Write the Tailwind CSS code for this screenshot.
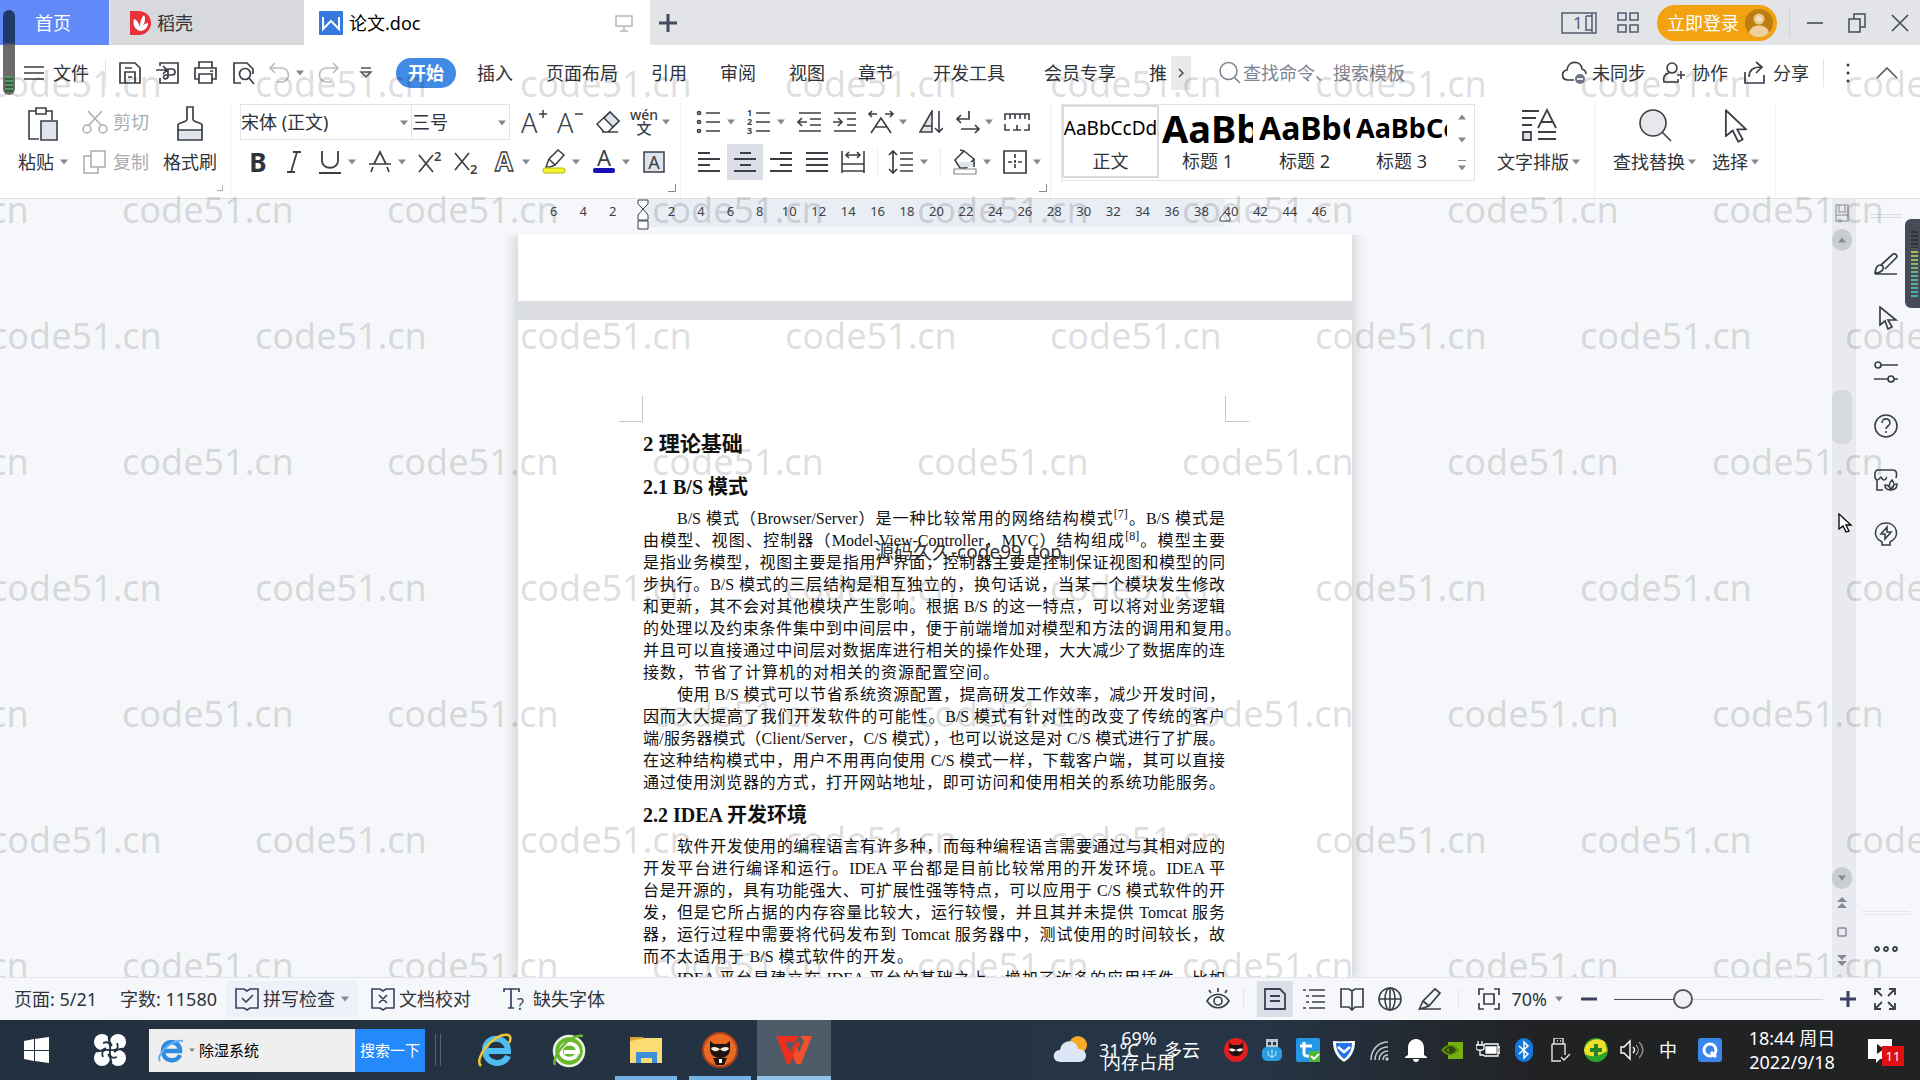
<!DOCTYPE html>
<html lang="zh-CN">
<head>
    <meta charset="UTF-8">
    <meta name="viewport" content="width=device-width, initial-scale=1.0">
    <title>论文.doc</title>
    <script src="https://cdn.jsdelivr.net/npm/@tailwindcss/browser@4"></script>
    <style>
        body { font-family: 'Noto Sans', 'Noto Sans CJK SC', sans-serif; }
        .doc { font-family: 'Liberation Serif', 'Noto Sans CJK SC', serif; }
    </style>
</head>
<body class="relative flex h-screen flex-col overflow-hidden bg-white text-lg leading-6 text-[#2f333a]">

    <!-- shared icon shapes -->
    <svg class="hidden">
        <symbol id="caret" viewBox="0 0 8 5"><path d="M0 0h8L4 5z" fill="#85888e"/></symbol>
        <symbol id="launcher" viewBox="0 0 8 8"><path d="M7.500 0v7.500H0" fill="none" stroke="#85888e"/></symbol>
        <symbol id="pointer" viewBox="0 0 24 32"><path d="M3 2v23l6-5 5 10 4-2-5-9h8z" fill="#fff" stroke="#3b3f46" stroke-width="1.600" stroke-linejoin="round"/></symbol>
    </svg>

    <header class="flex h-[45px] shrink-0 items-center bg-[#e2e4e7]">
        <a href="#" class="flex h-full w-[109px] items-center bg-[#6189f8] pl-[35px] text-white">首页</a>
        <a href="#" class="ml-0.5 flex h-full w-[193px] items-center gap-1 bg-[#d8d9dd] pl-[18px]">
            <svg class="h-6 w-6" viewBox="0 0 24 24"><path d="M1 0h9a12 12 0 0 1 0 24H1z" fill="#e8323c"/><path d="M11 20C4 18 4 11 5 8c3 1 5 4 6 8 0-5 1-9 4-12 2 4 1 8-2 12 2-3 4-4 6-4 0 4-3 8-8 8z" fill="#fff"/></svg>
            <span>稻壳</span>
        </a>
        <a href="#" class="flex h-full w-[346px] items-center gap-1.5 bg-white pl-[15px]">
            <svg class="h-6 w-6" viewBox="0 0 24 24"><rect width="24" height="24" rx="1" fill="#3678dc"/><path d="M4 6v12l8-8 8 8V6" fill="none" stroke="#fff" stroke-width="2"/></svg>
            <span class="text-black">论文.doc</span>
            <svg class="mr-4 ml-auto h-5 w-5" viewBox="0 0 20 20" fill="none" stroke="#b4b7bd" stroke-width="1.500"><path d="M2 3h16v10H2zM10 13v5M6 18h8"/></svg>
        </a>
        <button class="ml-2 flex h-5 w-5 items-center" aria-label="新建标签"><svg class="h-5 w-5" viewBox="0 0 20 20"><path d="M10 1v18M1 10h18" stroke="#454a5e" stroke-width="3"/></svg></button>
        <div class="ml-auto flex h-full items-center pr-[11px]">
            <button aria-label="单页模式"><svg class="h-6 w-9" viewBox="0 0 36 24" fill="none" stroke="#565b70" stroke-width="1.500"><path d="M1 2h34v20H1zM25 5h6M25 5v14h6M31 2v20"/><text x="12" y="18" font-size="17" fill="#565b70" stroke="none">1</text></svg></button>
            <button class="ml-5" aria-label="应用"><svg class="h-[22px] w-[22px]" viewBox="0 0 22 22" fill="none" stroke="#565b70" stroke-width="1.600"><path d="M1 1h8v7H1zM13 1h8v7h-8zM1 13h8v7H1zM13 13h8v7h-8z"/></svg></button>
            <button class="ml-[18px] flex h-9 w-[120px] items-center gap-1.5 rounded-full bg-[#f2a30f] pl-2.5 text-white">立即登录
                <svg class="h-7 w-7" viewBox="0 0 28 28"><circle cx="14" cy="14" r="14" fill="#bd7d11"/><circle cx="14" cy="10" r="5.500" fill="#e8c890"/><circle cx="14" cy="10" r="3" fill="#f3dfba"/><path d="M4 24c1-10 19-10 20 0a14 14 0 0 1-20 0z" fill="#eed09c"/></svg>
            </button>
            <span class="ml-3 h-7 w-px bg-[#d0d2d6]"></span>
            <button class="ml-[17px]" aria-label="最小化"><svg class="h-5 w-4" viewBox="0 0 16 20"><path d="M0 10h16" stroke="#454a55" stroke-width="1.600"/></svg></button>
            <button class="ml-6" aria-label="还原"><svg class="h-5 w-5" viewBox="0 0 20 20" fill="none" stroke="#454a55" stroke-width="1.500"><path d="M2 6h11v13H2zM7 6V1h11v13h-5"/></svg></button>
            <button class="ml-6" aria-label="关闭"><svg class="h-5 w-[18px]" viewBox="0 0 18 20"><path d="M1 2l16 16M17 2L1 18" stroke="#454a55" stroke-width="1.600"/></svg></button>
        </div>
    </header>

    <nav class="flex h-[52px] shrink-0 items-center bg-white pt-1 pr-[22px] pl-6 whitespace-nowrap">
        <button class="flex items-center gap-[9px]">
            <svg class="h-4 w-5" viewBox="0 0 20 16"><path d="M0 2h20M0 8h20M0 14h20" stroke="#3b3f46" stroke-width="1.500"/></svg>文件
        </button>
        <span class="ml-4 h-7 w-px bg-[#e3e5e8]"></span>
        <div class="ml-3 flex items-center gap-3.5">
            <button aria-label="保存"><svg class="h-6 w-6" viewBox="0 0 24 24" fill="none" stroke="#3b3f46" stroke-width="1.700"><path d="M2 2h15l5 5v15H2zM7 22V11h10v11M7 7h7M10 16h4"/></svg></button>
            <button aria-label="输出为PDF"><svg class="h-6 w-6" viewBox="0 0 24 24" fill="none" stroke="#3b3f46" stroke-width="1.700"><path d="M4 5V2h18v20H4v-5M0 9h10M7 5l4 4-4 4M12 17V8h4c4 0 4 6 0 6h-6c-3 0-3 4-1 4s3-1 3-4"/></svg></button>
            <button aria-label="打印"><svg class="h-6 w-6" viewBox="0 0 24 24" fill="none" stroke="#3b3f46" stroke-width="1.700"><path d="M5 7V1h13v6M5 18H1V7h21v11h-4M5 13h13v9H5zM16 10h3"/></svg></button>
            <button aria-label="打印预览"><svg class="h-6 w-6" viewBox="0 0 24 24" fill="none" stroke="#3b3f46" stroke-width="1.700"><path d="M9 22H2V2h13l6 6v5"/><circle cx="13" cy="13" r="5.500"/><path d="M17 17l5 6"/></svg></button>
        </div>
        <button class="ml-3 flex items-center gap-1" aria-label="撤销"><svg class="h-6 w-6" viewBox="0 0 24 24" fill="none" stroke="#b9bcc2" stroke-width="1.700"><path d="M7 2L2 7l5 5M2 7h11c10 0 10 14 0 14H9"/></svg><svg class="h-1.5 w-2"><use href="#caret"/></svg></button>
        <button class="ml-3" aria-label="恢复"><svg class="h-6 w-6" viewBox="0 0 24 24" fill="none" stroke="#b9bcc2" stroke-width="1.700"><path d="M17 2l5 5-5 5M22 7H11C1 7 1 21 11 21h4"/></svg></button>
        <button class="ml-[18px]" aria-label="自定义快速访问"><svg class="h-4 w-4" viewBox="0 0 16 16" fill="none" stroke="#55585f" stroke-width="1.500"><path d="M3 3h10M3 7h10l-5 5z"/></svg></button>

        <button class="ml-[22px] h-[30px] w-[60px] rounded-full bg-[#418ae6] font-bold text-white">开始</button>
        <div class="ml-[21px] flex items-center gap-[33px]">
            <button>插入</button>
            <button>页面布局</button>
            <button>引用</button>
            <button>审阅</button>
            <button>视图</button>
            <button>章节</button>
            <button class="mx-1.5">开发工具</button>
            <button>会员专享</button>
            <button>推</button>
        </div>
        <button class="ml-1 flex h-[34px] w-5 items-center justify-center bg-[#e9eaec]" aria-label="更多选项卡"><svg class="h-2.5 w-1.5" viewBox="0 0 6 10"><path d="M1 1l4 4-4 4" fill="none" stroke="#3b3f46" stroke-width="1.400"/></svg></button>
        <label class="ml-7 flex items-center gap-0.5">
            <svg class="h-6 w-[22px]" viewBox="0 0 22 24" fill="none" stroke="#7b8190" stroke-width="1.500"><circle cx="9.500" cy="10" r="8.500"/><path d="M15.500 16.500L21 22"/></svg>
            <input type="text" class="w-44 bg-transparent outline-none placeholder:text-[#7d8390]" placeholder="查找命令、搜索模板" aria-label="查找命令">
        </label>
        <div class="ml-auto flex items-center">
            <button class="flex items-center gap-[5px]"><svg class="h-6 w-[26px]" viewBox="0 0 26 24" fill="none" stroke="#3b3f46" stroke-width="1.700"><path d="M13 19H7C0 19 0 10 6 9 7-1 20-1 21 8c3 1 4 3 4 5"/><circle cx="19" cy="18" r="5" fill="#6d7485" stroke="none"/><path d="M16 18h6" stroke="#fff"/></svg>未同步</button>
            <button class="ml-4 flex items-center gap-1.5"><svg class="h-6 w-6" viewBox="0 0 24 24" fill="none" stroke="#3b3f46" stroke-width="1.600"><circle cx="10" cy="7" r="5"/><path d="M7 12c-5 1-6 4-5 9h14v-3M15 14h8M19 10v8"/></svg>协作</button>
            <button class="ml-[15px] flex items-center gap-1.5"><svg class="h-6 w-6" viewBox="0 0 24 24" fill="none" stroke="#3b3f46" stroke-width="1.700"><path d="M2 11v11h19v-8M6 16c0-7 4-10 12-10M13 1l6 5-6 6"/></svg>分享</button>
            <span class="ml-3.5 h-7 w-px bg-[#e3e5e8]"></span>
            <button class="ml-[22px]" aria-label="更多"><svg class="h-5 w-1" viewBox="0 0 4 20" fill="#3b3f46"><circle cx="2" cy="2" r="1.500"/><circle cx="2" cy="10" r="1.500"/><circle cx="2" cy="18" r="1.500"/></svg></button>
            <button class="ml-[26px]" aria-label="收起功能区"><svg class="h-3 w-[22px]" viewBox="0 0 22 12"><path d="M1 11L11 1l10 10" fill="none" stroke="#55585f" stroke-width="1.600"/></svg></button>
        </div>
    </nav>

    <section class="flex h-[102px] shrink-0 border-b border-[#dddfe3] bg-white pt-[5px] whitespace-nowrap">
        <!-- clipboard -->
        <div class="flex w-[231px] border-r border-[#f0f1f3] pl-[18px]">
            <button class="flex w-[50px] flex-col">
                <span class="flex h-10 w-full items-center justify-center pt-1"><svg class="h-9 w-8" viewBox="0 0 32 36" fill="none" stroke="#3b3f46" stroke-width="1.600"><path d="M12 33H2V5h7M19 5h6v9M9 2h10v6H9z"/><path d="M14 15h16v19H14z" fill="#dfe3ea"/></svg></span>
                <span class="flex h-10 items-center gap-1.5">粘贴<svg class="h-1.5 w-2"><use href="#caret"/></svg></span>
            </button>
            <div class="ml-3.5 flex flex-col text-[#a9acb2]">
                <button class="flex h-10 items-center gap-[5px]"><svg class="h-6 w-[26px]" viewBox="0 0 26 24" fill="none" stroke="#a9acb2" stroke-width="1.500"><circle cx="5" cy="19" r="4"/><circle cx="21" cy="19" r="4"/><path d="M7 15L20 1M19 15L6 1"/></svg>剪切</button>
                <button class="flex h-10 items-center gap-[5px]"><svg class="h-6 w-[26px]" viewBox="0 0 26 24" fill="none" stroke="#a9acb2" stroke-width="1.500"><path d="M9 1h14v16H9zM9 6H2v17h14v-6"/></svg>复制</button>
            </div>
            <button class="ml-3.5 flex flex-col">
                <span class="flex h-10 w-full items-center justify-center pt-1"><svg class="h-9 w-7" viewBox="0 0 28 36" fill="none" stroke="#3b3f46" stroke-width="1.700"><path d="M2 24h24v10H2z" fill="#dfe3ea"/><path d="M2 24v-5c0-3 9-2 9-6V1h6v12c0 4 9 3 9 6v5"/></svg></span>
                <span class="flex h-10 items-center">格式刷</span>
            </button>
            <svg class="mr-[7px] mb-1.5 ml-auto h-2 w-2 self-end"><use href="#launcher"/></svg>
        </div>

        <!-- font -->
        <div class="flex w-[450px] border-r border-[#f0f1f3] pl-[9px]">
            <div>
                <div class="flex h-10 items-center">
                    <div class="relative">
                        <select class="h-9 w-[172px] appearance-none border border-[#e1e3e7]" aria-label="字体"><option>宋体 (正文)</option></select>
                        <svg class="absolute top-4 right-1 h-1.5 w-2"><use href="#caret"/></svg>
                    </div>
                    <div class="relative">
                        <select class="h-9 w-[98px] appearance-none border border-l-0 border-[#e1e3e7]" aria-label="字号"><option>三号</option></select>
                        <svg class="absolute top-4 right-1 h-1.5 w-2"><use href="#caret"/></svg>
                    </div>
                    <button class="ml-1.5 flex w-9 justify-center" aria-label="增大字号"><svg class="h-7 w-7" viewBox="0 0 28 28"><text x="1" y="25" font-size="27" font-weight="300" fill="#3b3f46">A</text><path d="M19 6h8M23 2v8" stroke="#3b3f46" stroke-width="1.500"/></svg></button>
                    <button class="flex w-9 justify-center" aria-label="减小字号"><svg class="h-7 w-7" viewBox="0 0 28 28"><text x="1" y="25" font-size="27" font-weight="300" fill="#3b3f46">A</text><path d="M19 6h8" stroke="#3b3f46" stroke-width="1.500"/></svg></button>
                    <button class="ml-0.5 flex w-9 justify-center" aria-label="清除格式"><svg class="h-6 w-6" viewBox="0 0 24 24" fill="none" stroke="#3b3f46" stroke-width="1.500"><path d="M1 14L14 2l9 9-11 11H8zM6 22h16"/><path d="M8 8l9 9 6-6-9-9z" fill="#dfe3ea"/></svg></button>
                    <button class="flex w-[50px] items-center" aria-label="拼音指南"><svg class="h-7 w-9" viewBox="0 0 36 28" fill="#3b3f46"><text x="18" y="12" font-size="14" font-weight="500" text-anchor="middle">wén</text><text x="18" y="26" font-size="15" font-weight="500" text-anchor="middle">文</text></svg><svg class="h-1.5 w-2"><use href="#caret"/></svg></button>
                </div>
                <div class="flex h-10 items-center">
                    <button class="w-9 text-center text-[26px] font-bold" aria-label="加粗">B</button>
                    <button class="flex w-9 justify-center" aria-label="倾斜"><svg class="h-6 w-4" viewBox="0 0 16 24"><path d="M7 2h8M1 22h8M11 2L5 22" fill="none" stroke="#3b3f46" stroke-width="1.800"/></svg></button>
                    <button class="flex w-[50px] items-center" aria-label="下划线"><svg class="h-6 w-9" viewBox="0 0 36 24"><path d="M10 1v10c0 9 16 9 16 0V1M7 23h22" fill="none" stroke="#3b3f46" stroke-width="1.800"/></svg><svg class="h-1.5 w-2"><use href="#caret"/></svg></button>
                    <button class="flex w-[50px] items-center" aria-label="删除线"><svg class="h-6 w-9" viewBox="0 0 36 24"><path d="M7 14h22M12 14l6-12 6 12M11 17l-2 5M25 17l2 5" fill="none" stroke="#3b3f46" stroke-width="1.700"/></svg><svg class="h-1.5 w-2"><use href="#caret"/></svg></button>
                    <button class="flex w-9 justify-center" aria-label="上标"><svg class="h-6 w-6" viewBox="0 0 24 24"><path d="M1 5l14 17M15 5L1 22" stroke="#3b3f46" stroke-width="1.700"/><text x="16" y="11" font-size="13" font-weight="600" fill="#3b3f46">2</text></svg></button>
                    <button class="flex w-9 justify-center" aria-label="下标"><svg class="h-6 w-6" viewBox="0 0 24 24"><path d="M1 3l14 17M15 3L1 20" stroke="#3b3f46" stroke-width="1.700"/><text x="16" y="24" font-size="13" font-weight="600" fill="#3b3f46">2</text></svg></button>
                    <button class="ml-0.5 flex w-[50px] items-center" aria-label="文字效果"><svg class="h-7 w-9" viewBox="0 0 36 28"><text x="18" y="23" font-size="26" font-weight="700" text-anchor="middle" fill="#fff" stroke="#3b3f46" stroke-width="1.300">A</text></svg><svg class="h-1.5 w-2"><use href="#caret"/></svg></button>
                    <button class="flex w-[50px] items-center" aria-label="突出显示"><svg class="h-7 w-9" viewBox="0 0 36 28" fill="none" stroke="#3b3f46" stroke-width="1.500"><path d="M10 19l3-8 9-9 6 5-9 10-5 2zM13 11l6 6"/><rect x="7" y="20" width="22" height="5" rx="2" fill="#f1f52a" stroke="#b5b81e" stroke-width="1"/></svg><svg class="h-1.5 w-2"><use href="#caret"/></svg></button>
                    <button class="flex w-[50px] items-center" aria-label="字体颜色"><svg class="h-7 w-9" viewBox="0 0 36 28"><text x="18" y="18" font-size="22" text-anchor="middle" fill="#3b3f46">A</text><rect x="7" y="20" width="22" height="5" rx="2" fill="#1410b4"/></svg><svg class="h-1.5 w-2"><use href="#caret"/></svg></button>
                    <button class="flex w-9 justify-center" aria-label="字符底纹"><svg class="h-6 w-6" viewBox="0 0 24 24"><rect x="2" y="2" width="20" height="20" fill="#dfe3ea" stroke="#3b3f46" stroke-width="1.500"/><text x="12" y="19" font-size="18" text-anchor="middle" fill="#3b3f46">A</text></svg></button>
                </div>
            </div>
            <svg class="mr-4 mb-1.5 -ml-2 h-2 w-2 shrink-0 self-end"><use href="#launcher"/></svg>
        </div>

        <!-- paragraph -->
        <div class="flex w-[370px] border-r border-[#f0f1f3] pl-2.5">
            <div>
                <div class="flex h-10 items-center">
                    <button class="flex w-[50px] items-center" aria-label="项目符号"><svg class="h-6 w-9" viewBox="0 0 36 24" fill="none" stroke="#3b3f46" stroke-width="1.700"><circle cx="8" cy="3" r="1.500"/><circle cx="8" cy="12" r="1.500"/><circle cx="8" cy="21" r="1.500"/><path d="M15 3h14M15 12h14M15 21h14"/></svg><svg class="h-1.5 w-2"><use href="#caret"/></svg></button>
                    <button class="flex w-[50px] items-center" aria-label="编号"><svg class="h-7 w-9" viewBox="0 0 36 28" fill="#3b3f46"><g font-size="9" font-weight="700"><text x="6" y="8">1</text><text x="6" y="17">2</text><text x="6" y="26">3</text></g><path d="M15 5h14M15 14h14M15 23h14" stroke="#3b3f46" stroke-width="1.700"/></svg><svg class="h-1.5 w-2"><use href="#caret"/></svg></button>
                    <button class="flex w-9 justify-center" aria-label="减少缩进"><svg class="h-6 w-6" viewBox="0 0 24 24" fill="none" stroke="#3b3f46" stroke-width="1.700"><path d="M2 3h22M13 9h11M13 15h11M2 21h22M10 12H1M5 8l-4 4 4 4"/></svg></button>
                    <button class="flex w-9 justify-center" aria-label="增加缩进"><svg class="h-6 w-6" viewBox="0 0 24 24" fill="none" stroke="#3b3f46" stroke-width="1.700"><path d="M1 3h22M14 9h9M14 15h9M1 21h22M0 12h9M5 8l4 4-4 4"/></svg></button>
                    <button class="flex w-[50px] items-center" aria-label="中文版式"><svg class="h-6 w-9" viewBox="0 0 36 24" fill="none" stroke="#3b3f46" stroke-width="1.600"><path d="M6 4h8M9 1L6 4l3 3M22 4h8M27 1l3 3-3 3M8 23L18 8l10 15M12 17h12"/></svg><svg class="h-1.5 w-2"><use href="#caret"/></svg></button>
                    <button class="flex w-9 justify-center" aria-label="排序"><svg class="h-6 w-6" viewBox="0 0 24 24" fill="none" stroke="#3b3f46" stroke-width="1.600"><path d="M1 22L13 1v21z" fill="#dfe3ea"/><path d="M5 16h8M20 1v21M16 18l4 4 4-4"/></svg></button>
                    <button class="flex w-[50px] items-center" aria-label="换行符"><svg class="h-6 w-9" viewBox="0 0 36 24" fill="none" stroke="#3b3f46" stroke-width="1.700"><path d="M20 1v8H8M12 5L8 9l4 4M12 19h18M26 15l4 4-4 4"/></svg><svg class="h-1.5 w-2"><use href="#caret"/></svg></button>
                    <button class="flex w-9 justify-center" aria-label="标尺"><svg class="h-[18px] w-[26px]" viewBox="0 0 26 18" fill="none" stroke="#3b3f46" stroke-width="1.600"><path d="M1 7V1h24v6M6 1v5M11 1v5M16 1v5M21 1v5M1 11v6h5M25 11v6h-5M9 17h8M13 12v5"/></svg></button>
                </div>
                <div class="flex h-10 items-center">
                    <button class="flex w-9 justify-center" aria-label="左对齐"><svg class="h-6 w-6" viewBox="0 0 24 24" stroke="#3b3f46" stroke-width="1.800"><path d="M1 3h12M1 9h22M1 15h12M1 21h22"/></svg></button>
                    <button class="flex h-9 w-9 items-center justify-center bg-[#dcdfe7]" aria-label="居中"><svg class="h-6 w-6" viewBox="0 0 24 24" stroke="#3b3f46" stroke-width="1.800"><path d="M7 3h11M1 9h22M7 15h11M1 21h22"/></svg></button>
                    <button class="flex w-9 justify-center" aria-label="右对齐"><svg class="h-6 w-6" viewBox="0 0 24 24" stroke="#3b3f46" stroke-width="1.800"><path d="M11 3h12M1 9h22M11 15h12M1 21h22"/></svg></button>
                    <button class="flex w-9 justify-center" aria-label="两端对齐"><svg class="h-6 w-6" viewBox="0 0 24 24" stroke="#3b3f46" stroke-width="1.800"><path d="M1 3h22M1 9h22M1 15h22M1 21h22"/></svg></button>
                    <button class="flex w-9 justify-center" aria-label="分散对齐"><svg class="h-6 w-6" viewBox="0 0 24 24" fill="none" stroke="#3b3f46" stroke-width="1.600"><path d="M1 1v22M23 1v22M5 5h14M8 2L5 5l3 3M16 2l3 3-3 3M1 14h22M1 21h22"/></svg></button>
                    <span class="mx-1.5 h-7 w-px bg-[#eceef0]"></span>
                    <button class="flex w-[50px] items-center" aria-label="行距"><svg class="h-6 w-9" viewBox="0 0 36 24" fill="none" stroke="#3b3f46" stroke-width="1.700"><path d="M9 1v22M5 5l4-4 4 4M5 19l4 4 4-4M16 3h13M16 9h13M16 15h13M16 21h13"/></svg><svg class="h-1.5 w-2"><use href="#caret"/></svg></button>
                    <span class="mx-1.5 h-7 w-px bg-[#eceef0]"></span>
                    <button class="flex w-[50px] items-center" aria-label="底纹颜色"><svg class="h-7 w-9" viewBox="0 0 36 28" fill="none" stroke="#3b3f46" stroke-width="1.600"><path d="M8 12l9-9 10 8-8 9h-6z"/><path d="M12 14h14v5h-13z" fill="#dfe3ea" stroke="none"/><path d="M17 3l-4-1M27 11v8"/><path d="M7 21h22v5H7z" fill="#fff" stroke="#85888e" stroke-width="1.200"/></svg><svg class="h-1.5 w-2"><use href="#caret"/></svg></button>
                    <button class="flex w-[50px] items-center" aria-label="边框"><svg class="h-6 w-9" viewBox="0 0 36 24" fill="none" stroke="#3b3f46" stroke-width="1.700"><path d="M7 1h22v22H7z"/><path d="M11 12h14M18 4v16" stroke-dasharray="4 2 2 2"/></svg><svg class="h-1.5 w-2"><use href="#caret"/></svg></button>
                </div>
            </div>
            <svg class="mb-1.5 -ml-2 h-2 w-2 shrink-0 self-end"><use href="#launcher"/></svg>
        </div>

        <!-- style gallery -->
        <div class="mt-0.5 ml-2.5 flex h-[77px] w-[414px] border border-[#e1e3e7]">
            <button class="flex h-[73px] w-[97px] flex-col items-center overflow-hidden border-2 border-[#d9dbe0] text-black"><span class="flex h-[42px] items-center text-[19px]">AaBbCcDd</span><span class="text-[#2f333a]">正文</span></button>
            <button class="flex h-[73px] w-[97px] flex-col items-center overflow-hidden px-[3px] pt-0.5 text-black"><span class="flex h-[42px] w-full items-center overflow-hidden text-[38px] font-bold">AaBb</span><span class="text-[#2f333a]">标题 1</span></button>
            <button class="flex h-[73px] w-[97px] flex-col items-center overflow-hidden px-[3px] pt-0.5 text-black"><span class="flex h-[42px] w-full items-center overflow-hidden text-[32px] font-bold">AaBbC</span><span class="text-[#2f333a]">标题 2</span></button>
            <button class="flex h-[73px] w-[97px] flex-col items-center overflow-hidden px-[3px] pt-0.5 text-black"><span class="flex h-[42px] w-full items-center overflow-hidden text-[27px] font-bold">AaBbCc</span><span class="text-[#2f333a]">标题 3</span></button>
            <div class="flex flex-1 flex-col items-center justify-around">
                <button class="rotate-180" aria-label="上一行"><svg class="h-1.5 w-2"><use href="#caret"/></svg></button>
                <button aria-label="下一行"><svg class="h-1.5 w-2"><use href="#caret"/></svg></button>
                <button class="border-t border-[#85888e] pt-1" aria-label="展开样式"><svg class="h-1.5 w-2"><use href="#caret"/></svg></button>
            </div>
        </div>

        <div class="ml-2.5 flex w-[110px] border-r border-[#f0f1f3] pl-3">
            <button class="flex flex-col">
                <span class="flex h-12 w-full items-center justify-center"><svg class="h-9 w-9" viewBox="0 0 36 36" fill="none" stroke="#3b3f46" stroke-width="1.800"><path d="M1 3h17M1 10h14M1 17h10M17 31h18M17 24h18"/><path d="M2 24h8v8H2z" fill="#dfe3ea"/><path d="M17 20L26 2l9 18M20 14h12"/></svg></span>
                <span class="flex h-6 items-center gap-[3px]">文字排版<svg class="h-1.5 w-2"><use href="#caret"/></svg></span>
            </button>
        </div>
        <div class="flex w-[181px] gap-4 border-r border-[#f0f1f3] pl-[18px]">
            <button class="flex flex-col">
                <span class="flex h-12 w-full items-center justify-center"><svg class="h-9 w-9" viewBox="0 0 36 36" fill="none" stroke="#3b3f46" stroke-width="1.600"><circle cx="16" cy="15" r="13" fill="#e6e8ec"/><path d="M25 24l9 9"/></svg></span>
                <span class="flex h-6 items-center gap-[3px]">查找替换<svg class="h-1.5 w-2"><use href="#caret"/></svg></span>
            </button>
            <button class="flex flex-col">
                <span class="flex h-12 w-full items-center justify-center"><svg class="h-9 w-7"><use href="#pointer"/></svg></span>
                <span class="flex h-6 items-center gap-[3px]">选择<svg class="h-1.5 w-2"><use href="#caret"/></svg></span>
            </button>
        </div>
    </section>

    <main class="flex min-h-0 flex-1 bg-[#f5f7fa]">
        <div class="flex min-w-0 flex-1 flex-col items-center">
            <!-- ruler -->
            <div class="flex h-9 w-full shrink-0 justify-center pl-[38px]">
                <div class="relative flex w-[834px] justify-center">
                    <div class="absolute top-0 left-[125px] h-7 w-[582px] bg-[#e9edf4]"></div>
                    <div id="ruler" class="absolute top-[3px] left-[21px] grid w-[795px] grid-cols-27 text-center text-[13px] leading-[18px] text-[#3d4148]"></div>
                    <svg class="absolute top-0 left-[119px] h-8 w-3" viewBox="0 0 12 32" fill="#fff" stroke="#3b3f46"><path d="M1 1h10v4L6 10 1 5zM6 10l5 6v5H1v-5zM1 22h10v8H1z"/></svg>
                    <svg class="absolute top-1 left-[701px] h-5 w-3" viewBox="0 0 12 20" fill="#fff" stroke="#3b3f46"><path d="M6 9l5 6v3H1v-3z"/></svg>
                </div>
            </div>
            <!-- pages -->
            <div class="flex min-h-0 w-full flex-1 justify-center overflow-hidden pl-[38px]">
                <div class="doc flex w-[834px] flex-col bg-[#dcdde0] shadow-[0_0_12px_3px_#cdd0d5]">
                    <div class="mb-[19px] h-[66px] shrink-0 bg-white"></div>
                    <article class="flex-1 bg-white pt-[76px] pr-[127px] pl-[125px] text-base leading-[22px] whitespace-nowrap text-[#111]">
                        <div class="-mx-6 flex h-[26px] justify-between">
                            <span class="w-6 border-r border-b border-[#c4c6ca]"></span>
                            <span class="w-6 border-b border-l border-[#c4c6ca]"></span>
                        </div>
                        <h1 class="text-[21px] leading-[44px] font-bold">2 理论基础</h1>
                        <h2 class="text-xl leading-[42px] font-bold">2.1 B/S 模式</h2>
                        <div class="[&>p]:h-[22px] [&>p]:[text-align-last:justify]">
                            <p class="pl-[34px]">B/S 模式（Browser/Server）是一种比较常用的网络结构模式<sup class="text-xs leading-none">[7]</sup>。B/S 模式是</p>
                            <p>由模型、视图、控制器（Model-View-Controller，MVC）结构组成<sup class="text-xs leading-none">[8]</sup>。模型主要</p>
                            <p>是指业务模型，视图主要是指用户界面，控制器主要是控制保证视图和模型的同</p>
                            <p>步执行。B/S 模式的三层结构是相互独立的，换句话说，当某一个模块发生修改</p>
                            <p>和更新，其不会对其他模块产生影响。根据 B/S 的这一特点，可以将对业务逻辑</p>
                            <p class="-mr-4">的处理以及约束条件集中到中间层中，便于前端增加对模型和方法的调用和复用。</p>
                            <p>并且可以直接通过中间层对数据库进行相关的操作处理，大大减少了数据库的连</p>
                            <p class="w-[356px]">接数，节省了计算机的对相关的资源配置空间。</p>
                            <p class="pl-[34px]">使用 B/S 模式可以节省系统资源配置，提高研发工作效率，减少开发时间，</p>
                            <p>因而大大提高了我们开发软件的可能性。B/S 模式有针对性的改变了传统的客户</p>
                            <p>端/服务器模式（Client/Server，C/S 模式），也可以说这是对 C/S 模式进行了扩展。</p>
                            <p>在这种结构模式中，用户不用再向使用 C/S 模式一样，下载客户端，其可以直接</p>
                            <p>通过使用浏览器的方式，打开网站地址，即可访问和使用相关的系统功能服务。</p>
                        </div>
                        <h2 class="text-xl leading-[42px] font-bold">2.2 IDEA 开发环境</h2>
                        <div class="[&>p]:h-[22px] [&>p]:[text-align-last:justify]">
                            <p class="pl-[34px]">软件开发使用的编程语言有许多种，而每种编程语言需要通过与其相对应的</p>
                            <p>开发平台进行编译和运行。IDEA 平台都是目前比较常用的开发环境。IDEA 平</p>
                            <p>台是开源的，具有功能强大、可扩展性强等特点，可以应用于 C/S 模式软件的开</p>
                            <p>发，但是它所占据的内存容量比较大，运行较慢，并且其并未提供 Tomcat 服务</p>
                            <p>器，运行过程中需要将代码发布到 Tomcat 服务器中，测试使用的时间较长，故</p>
                            <p class="w-[270px]">而不太适用于 B/S 模式软件的开发。</p>
                            <p class="pl-[34px]">IDEA 平台是建立在 IDEA 平台的基础之上，增加了许多的应用插件，比如</p>
                        </div>
                    </article>
                </div>
            </div>
        </div>

        <!-- vertical scrollbar -->
        <div class="flex w-6 shrink-0 flex-col items-center bg-[#e8eaef] pt-1 pr-1">
            <svg class="h-5 w-4" viewBox="0 0 16 20" fill="none" stroke="#a3a7b3" stroke-width="1.500"><path d="M2 2h12v16H2zM5 2v7h6V2M2 12h12"/></svg>
            <button class="mt-1.5 flex h-[22px] w-5 items-center justify-center rounded-full bg-[#c9ccd3]" aria-label="向上滚动"><svg class="h-1.5 w-2 rotate-180"><use href="#caret"/></svg></button>
            <div class="mt-[139px] h-[54px] w-5 rounded-lg bg-[#d6d9de]"></div>
            <button class="mt-auto flex h-[22px] w-5 items-center justify-center rounded-full bg-[#c9ccd3]" aria-label="向下滚动"><svg class="h-1.5 w-2"><use href="#caret"/></svg></button>
            <button class="mt-2 flex" aria-label="上一页"><svg class="h-3 w-2.5" viewBox="0 0 10 12" fill="#85889a"><path d="M5 0l5 5H0zM5 6l5 5H0z"/></svg></button>
            <button class="mt-[18px] flex" aria-label="选择浏览对象"><svg class="h-2.5 w-2.5" viewBox="0 0 10 10"><rect x="1" y="1" width="8" height="8" rx="1" fill="none" stroke="#85889a" stroke-width="1.500"/></svg></button>
            <button class="mt-[18px] mb-2.5 flex" aria-label="下一页"><svg class="h-3 w-2.5" viewBox="0 0 10 12" fill="#85889a"><path d="M0 0h10L5 5zM0 6h10l-5 5z"/></svg></button>
        </div>

        <!-- task pane -->
        <aside class="flex w-16 shrink-0 flex-col items-center gap-[30px] pr-1 pt-[15px]">
            <span class="mb-1 h-1 w-8 shrink-0 border-y border-[#d9dbdf]"></span>
            <button aria-label="样式"><svg class="h-6 w-6" viewBox="0 0 24 24" fill="none" stroke="#3b3f46" stroke-width="1.700"><path d="M1 22h22M1 21c1-6 2-8 6-8 4 1 3 8-6 8zM7 13L19 2c3-1 5 2 3 4L11 17"/></svg></button>
            <button aria-label="选择窗格"><svg class="h-6 w-6" viewBox="0 0 24 24" fill="none" stroke="#3b3f46" stroke-width="1.700"><path d="M6 1v18l5-4 3 8 4-2-4-7h8z"/></svg></button>
            <button aria-label="属性"><svg class="h-6 w-6" viewBox="0 0 24 24" fill="none" stroke="#3b3f46" stroke-width="1.700"><circle cx="4" cy="5" r="3"/><path d="M7 5h17M0 19h14M20 19h4"/><circle cx="17" cy="19" r="3"/></svg></button>
            <button aria-label="帮助"><svg class="h-6 w-6" viewBox="0 0 24 24" fill="none" stroke="#3b3f46" stroke-width="1.600"><circle cx="12" cy="12" r="11"/><path d="M8 9c0-6 8-5 8 0 0 3-4 3-4 6M12 17v2"/></svg></button>
            <button aria-label="稻壳资源"><svg class="h-6 w-6" viewBox="0 0 24 24" fill="none" stroke="#3b3f46" stroke-width="1.600"><path d="M9 22H3V12C0 11 0 2 4 2h15c4 0 4 4 3 8M3 12c3 0 3-3 4-3s0 3 3 3 2-3 3-3"/><path d="M17 22c-3-4-2-7 1-10 3 3 2 7-1 10zM17 22c-4 0-6-2-6-5 3 0 5 2 6 5zM17 22c4 0 6-2 6-6-3 0-5 3-6 6z"/></svg></button>
            <button aria-label="智能推荐"><svg class="h-6 w-6" viewBox="0 0 24 24" fill="none" stroke="#3b3f46" stroke-width="1.600"><path d="M8 20C-3 15 1 1 12 1s15 14 4 19v3H8zM13 5l-6 7h4v5l6-7h-4z"/></svg></button>
            <span class="mt-auto h-1 w-12 border-y border-[#e3e5e9]"></span>
            <button class="mb-6 flex" aria-label="更多工具"><svg class="h-2 w-6" viewBox="0 0 24 8" fill="none" stroke="#3b3f46" stroke-width="1.800"><circle cx="3" cy="4" r="2"/><circle cx="12" cy="4" r="2"/><circle cx="21" cy="4" r="2"/></svg></button>
        </aside>
    </main>

    <footer class="flex h-[43px] shrink-0 items-center border-t border-[#e2e5ea] bg-[#f5f7fa] pl-[14px] pr-6 whitespace-nowrap">
        <span class="w-[106px]">页面: 5/21</span>
        <span class="w-[107px]">字数: 11580</span>
        <button class="flex h-9 items-center gap-1 bg-[#edf2fa] px-2"><svg class="h-6 w-6" viewBox="0 0 24 24" fill="none" stroke="#3b3f5c" stroke-width="1.600"><path d="M9 2H1v19h8l3 2 3-2h8V2h-8l-3 2zM7 11l4 4 7-7"/></svg>拼写检查<svg class="ml-0.5 h-1.5 w-2"><use href="#caret"/></svg></button>
        <button class="ml-3.5 flex items-center gap-1"><svg class="h-6 w-6" viewBox="0 0 24 24" fill="none" stroke="#3b3f5c" stroke-width="1.600"><path d="M9 2H1v19h8l3 2 3-2h8V2h-8l-3 2zM8 8l8 8M16 8l-8 8"/></svg>文档校对</button>
        <button class="ml-8 flex items-center gap-1.5"><svg class="h-6 w-6" viewBox="0 0 24 24" fill="none" stroke="#3b3f5c" stroke-width="1.700"><path d="M1 5V2h15v3M8 2v19M5 21h6"/><text x="14" y="23" font-size="16" fill="#3b3f5c" stroke="none">?</text></svg>缺失字体</button>

        <div class="ml-auto flex items-center">
            <button aria-label="护眼模式"><svg class="h-6 w-6" viewBox="0 0 24 24" fill="none" stroke="#3b3f46" stroke-width="1.700"><path d="M1 14C7 5 17 5 23 14 17 23 7 23 1 14zM12 1v4M3 3l2 3M21 3l-2 3"/><circle cx="12" cy="14" r="4"/></svg></button>
            <span class="ml-[13px] h-5 w-px bg-[#e3e5e9]"></span>
            <button class="ml-[13px] flex h-9 w-9 items-center justify-center bg-[#dcdfe7]" aria-label="页面视图"><svg class="h-6 w-6" viewBox="0 0 24 24" fill="none" stroke="#3b3f56" stroke-width="1.800"><path d="M2 2h15l5 5v15H2zM7 9h10M7 14h10"/></svg></button>
            <button class="ml-[9px]" aria-label="大纲"><svg class="h-6 w-6" viewBox="0 0 24 24" stroke="#3b3f46" stroke-width="1.700"><path d="M1 3h3M7 3h16M4 9h3M10 9h13M4 15h3M10 15h13M1 21h3M7 21h16"/></svg></button>
            <button class="ml-[14px]" aria-label="阅读版式"><svg class="h-6 w-6" viewBox="0 0 24 24" fill="none" stroke="#3b3f46" stroke-width="1.700"><path d="M12 4L9 2H1v18h8l3 3 3-3h8V2h-8zM12 4v18"/></svg></button>
            <button class="ml-[14px]" aria-label="Web版式"><svg class="h-6 w-6" viewBox="0 0 24 24" fill="none" stroke="#3b3f46" stroke-width="1.600"><circle cx="12" cy="12" r="11"/><ellipse cx="12" cy="12" rx="5" ry="11"/><path d="M1 12h22M12 1v22"/></svg></button>
            <button class="ml-4" aria-label="写作模式"><svg class="h-6 w-6" viewBox="0 0 24 24" fill="none" stroke="#3b3f46" stroke-width="1.700"><path d="M1 23l4-9L17 2l5 4-11 13-9 3h21M5 14l6 5"/></svg></button>
            <span class="ml-4 h-5 w-px bg-[#e3e5e9]"></span>
            <button class="ml-[18px]" aria-label="适合页面"><svg class="h-6 w-6" viewBox="0 0 24 24" fill="none" stroke="#3b3f46" stroke-width="1.700"><path d="M2 8V2h5M17 2h5v6M22 16v6h-5M7 22H2v-6M7 7h10v10H7z"/></svg></button>
            <button class="ml-2.5 flex items-center gap-2">70%<svg class="h-1.5 w-2"><use href="#caret"/></svg></button>
            <button class="ml-[18px]" aria-label="缩小"><svg class="h-4 w-4" viewBox="0 0 16 16"><path d="M0 8h16" stroke="#3b4060" stroke-width="3"/></svg></button>
            <input type="range" value="31" aria-label="缩放" class="mx-[17px] h-5 w-[209px] appearance-none bg-[linear-gradient(90deg,#4b4f57_33%,#cfd1d5_33%)] bg-[length:100%_1px] bg-center bg-no-repeat [&::-webkit-slider-thumb]:h-5 [&::-webkit-slider-thumb]:w-5 [&::-webkit-slider-thumb]:appearance-none [&::-webkit-slider-thumb]:rounded-full [&::-webkit-slider-thumb]:border-2 [&::-webkit-slider-thumb]:border-[#55585f] [&::-webkit-slider-thumb]:bg-[#f0f1f3]">
            <button aria-label="放大"><svg class="h-4 w-4" viewBox="0 0 16 16"><path d="M0 8h16M8 0v16" stroke="#3b4060" stroke-width="3"/></svg></button>
            <button class="ml-[18px]" aria-label="全屏"><svg class="h-[22px] w-[22px]" viewBox="0 0 22 22" fill="none" stroke="#3b3f46" stroke-width="1.800"><path d="M8 8L1 1M1 7V1h6M14 8l7-7M15 1h6v6M8 14l-7 7M1 15v6h6M14 14l7 7M21 15v6h-6"/></svg></button>
        </div>
    </footer>

    <!-- desktop taskbar -->
    <div class="flex h-[60px] shrink-0 items-center bg-linear-to-r from-[#22303f] from-0% via-[#263546] via-65% to-[#212224] to-80% text-white whitespace-nowrap">
        <button class="ml-6" aria-label="开始菜单"><svg class="h-[26px] w-[25px]" viewBox="0 0 25 26" fill="#fff"><path d="M0 4l10-2v11H0zM11 2l14-2v13H11zM0 14h10v10L0 22zM11 14h14v12l-14-2z"/></svg></button>
        <button class="ml-11" aria-label="浏览器"><svg class="h-[34px] w-[34px]" viewBox="0 0 34 34"><g fill="#fff"><circle cx="9" cy="9" r="8"/><circle cx="25" cy="9" r="8"/><circle cx="25" cy="25" r="8"/><circle cx="9" cy="25" r="8"/><circle cx="17" cy="17" r="6"/></g><g fill="none" stroke="#22303f" stroke-width="1.800"><path d="M17 17C18 10 15 8 10 10M17 0C14 5 16 9 19 13"/><path d="M17 17C24 18 26 15 24 10M34 17C29 14 25 16 21 19"/><path d="M17 17C16 24 19 26 24 24M17 34C20 29 18 25 15 21"/><path d="M17 17C10 16 8 19 10 24M0 17C5 20 9 18 13 15"/></g></svg></button>
        <div class="ml-[22px] flex h-[43px] w-[276px] items-center bg-[#efeff0] text-[15px] text-black">
            <svg class="ml-2 h-7 w-7 shrink-0" viewBox="0 0 28 28" fill="none"><path d="M23 19c-3 8-17 7-17-4C6 3 23 3 23 15H8" stroke="#2f8be0" stroke-width="4.500"/><path d="M3 25C-2 20 14 3 26 5" stroke="#64b5f0" stroke-width="2"/></svg>
            <svg class="mx-1 h-1 w-1.5 shrink-0" viewBox="0 0 8 5"><use href="#caret"/></svg>
            <input type="text" value="除湿系统" aria-label="搜索" class="w-0 flex-1 bg-transparent outline-none">
            <button class="h-full w-[70px] bg-[#2489fb] text-[15px] text-white">搜索一下</button>
        </div>
        <span class="ml-2.5 h-8 w-1.5 border-x border-[#59636f]"></span>
        <button class="ml-9" aria-label="Internet Explorer"><svg class="h-9 w-9" viewBox="0 0 36 36" fill="none"><path d="M31 24c-4 11-23 9-23-6C8 3 31 3 31 19H11" stroke="#4fbdf0" stroke-width="6"/><path d="M4 34C-4 27 17 0 31 3c3 1 3 5 1 8" stroke="#f3c532" stroke-width="2.500"/></svg></button>
        <button class="ml-[38px]" aria-label="360浏览器"><svg class="h-9 w-9" viewBox="0 0 36 36" fill="none"><circle cx="18" cy="19" r="15" fill="#69b92e" stroke="#eaf6df" stroke-width="2.500"/><path d="M26 22c-3 7-16 6-16-3 0-10 17-10 17 1H13" stroke="#fff" stroke-width="4"/><path d="M4 33C0 26 18 1 32 4" stroke="#69b92e" stroke-width="2.500"/></svg></button>
        <div class="ml-7 flex h-full items-stretch gap-3">
            <button class="flex w-[62px] items-center justify-center border-y-4 border-t-transparent border-b-[#74b2e6]" aria-label="文件资源管理器"><svg class="h-7 w-[34px]" viewBox="0 0 34 28"><path d="M1 1h13l3 4H1z" fill="#d9a428"/><path d="M1 5l15-3h17v25H1z" fill="#fbdc74"/><path d="M7 27V16h21v11h-5v-5H12v5z" fill="#3d8fd8"/></svg></button>
            <button class="flex w-[62px] items-center justify-center border-y-4 border-t-transparent border-b-[#74b2e6]" aria-label="录屏工具"><svg class="h-9 w-9" viewBox="0 0 36 36"><circle cx="18" cy="18" r="17" fill="#ea6a24" stroke="#a8441b" stroke-width="2"/><path d="M8 9l4 3h12l4-3v8c0 12-20 12-20 0z" fill="#1d1413"/><path d="M9 16c3-2 6-1 9 1 3-2 6-3 9-1-1 4-7 4-9 1-2 3-8 3-9-1z" fill="#fbe8d8"/><path d="M11 26h14l-3 7h-8z" fill="#1d1413"/><path d="M17 27h3v4h-3z" fill="#fff"/></svg></button>
        </div>
        <button class="ml-1.5 flex h-full w-[74px] items-center justify-center border-y-4 border-t-[#505b69] border-b-[#8fc3ee] bg-[#505b69]" aria-label="WPS"><svg class="h-7 w-9" viewBox="0 0 36 28"><path d="M0 0h23l-4 6h-9l4 10 5-10h6L14 28h-3z" fill="#e92f20"/><path d="M24 0h12L25 28h-5l-3-9 4-8 2 6 5-12z" fill="#f4502c"/></svg></button>

        <div class="ml-auto flex items-center gap-3 pr-4">
            <svg class="h-8 w-[34px]" viewBox="0 0 34 32"><circle cx="25" cy="11" r="9" fill="#f7a928"/><path d="M8 28C-2 28-1 16 7 16 9 4 24 5 25 15c11 0 10 13 1 13z" fill="#dde6f5"/></svg>
            <div class="relative mr-3 flex w-[101px] justify-between">
                <span>31°C</span><span>多云</span>
                <span class="absolute -top-3 left-0 w-20 text-center">69%</span>
                <span class="absolute top-3 left-0 w-20 text-center">内存占用</span>
            </div>
            <svg class="h-6 w-6" viewBox="0 0 24 24"><circle cx="12" cy="12" r="12" fill="#e21e1e"/><path d="M5 4l3 3h8l3-3v8c0 8-14 8-14 0z" fill="#1d1413"/><path d="M5 11c3-1 5 0 7 1 2-1 4-2 7-1-1 3-5 3-7 1-2 2-6 2-7-1z" fill="#fff"/></svg>
            <svg class="h-6 w-6" viewBox="0 0 24 24"><path d="M6 1h12v8H6z" fill="#b9c4d0"/><path d="M8 4h3v3H8zM13 4h3v3h-3z" fill="#334"/><rect x="2" y="9" width="20" height="14" rx="5" fill="#2b9ee0"/><path d="M12 11v9M8 13v4l4 2 4-2v-4" fill="none" stroke="#bfe2f8"/></svg>
            <svg class="h-6 w-6" viewBox="0 0 24 24"><rect width="24" height="24" rx="2" fill="#2496e6"/><path d="M8 4v11c0 4 6 4 8 1M4 8h12" fill="none" stroke="#fff" stroke-width="3"/><path d="M13 13h11v11H13z" fill="#4cb833"/><path d="M15 18l3 3 5-5" fill="none" stroke="#fff" stroke-width="1.800"/></svg>
            <svg class="h-6 w-6" viewBox="0 0 24 24"><path d="M1 3c8 1 14 0 22 0 0 9-3 16-11 21C4 19 1 12 1 3z" fill="#fff"/><path d="M4 5h16c0 7-3 12-8 16C7 17 4 12 4 5z" fill="#2272e8"/><path d="M6 9l6 5 6-5" fill="none" stroke="#fff" stroke-width="2.500"/></svg>
            <svg class="h-6 w-6" viewBox="0 0 24 24" fill="none" stroke="#c3c8ce" stroke-width="1.500"><path d="M3 22C3 11 11 4 20 4M7 22C7 14 13 9 20 9M11 22c0-5 4-9 9-9M15 22c0-3 2-5 5-5"/><circle cx="19" cy="21" r="1" fill="#fff"/></svg>
            <svg class="h-6 w-6" viewBox="0 0 24 24" fill="#fff"><path d="M12 1c3 0 8 2 8 9v7l3 2v1H1v-1l3-2v-7c0-7 5-9 8-9zM9 21h6c0 4-6 4-6 0z"/></svg>
            <svg class="h-6 w-6" viewBox="0 0 24 24"><path d="M8 4h15v17H8z" fill="#76b011"/><path d="M1 12C6 5 14 5 19 12 14 19 6 19 1 12z" fill="#5a8c0b"/><path d="M5 12c4-4 7-4 10 0-3 4-6 4-10 0z" fill="none" stroke="#2a3c12" stroke-width="1.500"/><circle cx="11" cy="12" r="2" fill="#2a3c12"/></svg>
            <svg class="h-6 w-6" viewBox="0 0 24 24" fill="none" stroke="#fff" stroke-width="1.300"><path d="M2 3v4M6 3v4M0 7h8v3c0 3-8 3-8 0zM4 12v5h4M8 6h14v12H8M22 9h2v6h-2"/><path d="M10 9h10v6H10z" fill="#fff"/></svg>
            <svg class="h-6 w-6" viewBox="0 0 24 24"><rect x="3" width="18" height="24" rx="9" fill="#1277d8"/><path d="M7 8l9 8-4 4V4l4 4-9 8" fill="none" stroke="#fff" stroke-width="1.500"/></svg>
            <svg class="h-6 w-6" viewBox="0 0 24 24" fill="none" stroke="#e4e4e4" stroke-width="1.400"><path d="M6 6V0h9v6M4 6h13v11M4 6v17h9M9 3h1M12 3h1M13 19l3 3 6-6"/></svg>
            <svg class="h-6 w-6" viewBox="0 0 24 24"><circle cx="12" cy="12" r="12" fill="#2ea32c"/><path d="M0 12C2 2 14-2 21 4l2 9C15 18 8 20 1 16z" fill="#f4dc2b"/><path d="M12 6v12M6 12h12" stroke="#21832a" stroke-width="4"/></svg>
            <svg class="h-6 w-6" viewBox="0 0 24 24" fill="none" stroke="#fff" stroke-width="1.400"><path d="M1 9h3l6-6v18l-6-6H1zM13 9c2 2 2 4 0 6"/><path d="M16 7c3 3 3 7 0 10M19 4c5 5 5 11 0 16" stroke="#8c8c8c"/></svg>
            <span class="w-6 text-center">中</span>
            <svg class="ml-1.5 h-6 w-6" viewBox="0 0 24 24"><rect width="24" height="24" rx="3" fill="#3b86ea"/><circle cx="12" cy="12" r="6" fill="none" stroke="#fff" stroke-width="3"/><path d="M13 14l5 5" stroke="#fff" stroke-width="3"/></svg>
            <div class="ml-3 w-[92px] text-center leading-6"><div>18:44 周日</div><div>2022/9/18</div></div>
            <button class="relative ml-[18px] h-8 w-9" aria-label="通知">
                <svg class="h-[26px] w-6" viewBox="0 0 24 26"><path d="M0 2h24v20H12l-4 4v-4H0z" fill="#fff"/><path d="M9 7l7 5-7 5z" fill="#222"/></svg>
                <span class="absolute top-3 left-3.5 h-5 w-[22px] bg-[#e00f12] text-center text-[13px] leading-5">11</span>
            </button>
        </div>
    </div>

    <!-- overlays -->
    <div id="watermarks" class="pointer-events-none absolute inset-x-0 top-0 bottom-[103px] overflow-hidden pt-[21px] text-4xl text-black/15"></div>
    <span class="absolute top-[540px] left-[875px] text-[19px] text-[#333]">源码久久-code99 .top</span>
    <div class="absolute top-[10px] left-[3px] h-[85px] w-3 rounded-md bg-linear-to-b from-[#1e3a6c] from-38% to-[#6b6b6b] to-42% pt-[66px]">
        <div class="mx-auto h-4 w-2 bg-[repeating-linear-gradient(#4f9a5c_0_2px,#3b5a44_2px_4px)]"></div>
    </div>
    <div class="absolute top-[219px] right-0 h-[89px] w-[15px] rounded-l-md bg-[#474b57] pt-3 pl-1.5">
        <div class="h-[66px] w-[7px] bg-[repeating-linear-gradient(transparent_0_2px,#474b57_2px_4px),linear-gradient(#2e323d_25%,#b4bc45_30%,#5fb487_65%,#3fb4b0)]"></div>
    </div>
    <svg class="absolute top-[513px] left-[1838px] h-5 w-[15px]" viewBox="0 0 15 20"><path d="M1 1v15l4-3 3 6 3-1-3-6h5z" fill="#fff" stroke="#000" stroke-width="1.300"/></svg>

    <script>
        // ruler numbers: 6 4 2 | 2 4 ... 46
        const ruler = document.getElementById('ruler');
        for (let n = -6; n <= 46; n += 2) {
            const mark = document.createElement('span');
            mark.textContent = n === 0 ? '' : Math.abs(n);
            ruler.appendChild(mark);
        }

        // staggered watermark rows
        const watermarks = document.getElementById('watermarks');
        for (let r = 0; r < 8; r++) {
            const row = document.createElement('div');
            row.className = r % 2 ? 'flex h-[126px] items-center -ml-[143px]' : 'flex h-[126px] items-center -ml-2.5';
            row.innerHTML = '<span class="w-[265px] shrink-0">code51.cn</span>'.repeat(9);
            watermarks.appendChild(row);
        }
    </script>
</body>
</html>
